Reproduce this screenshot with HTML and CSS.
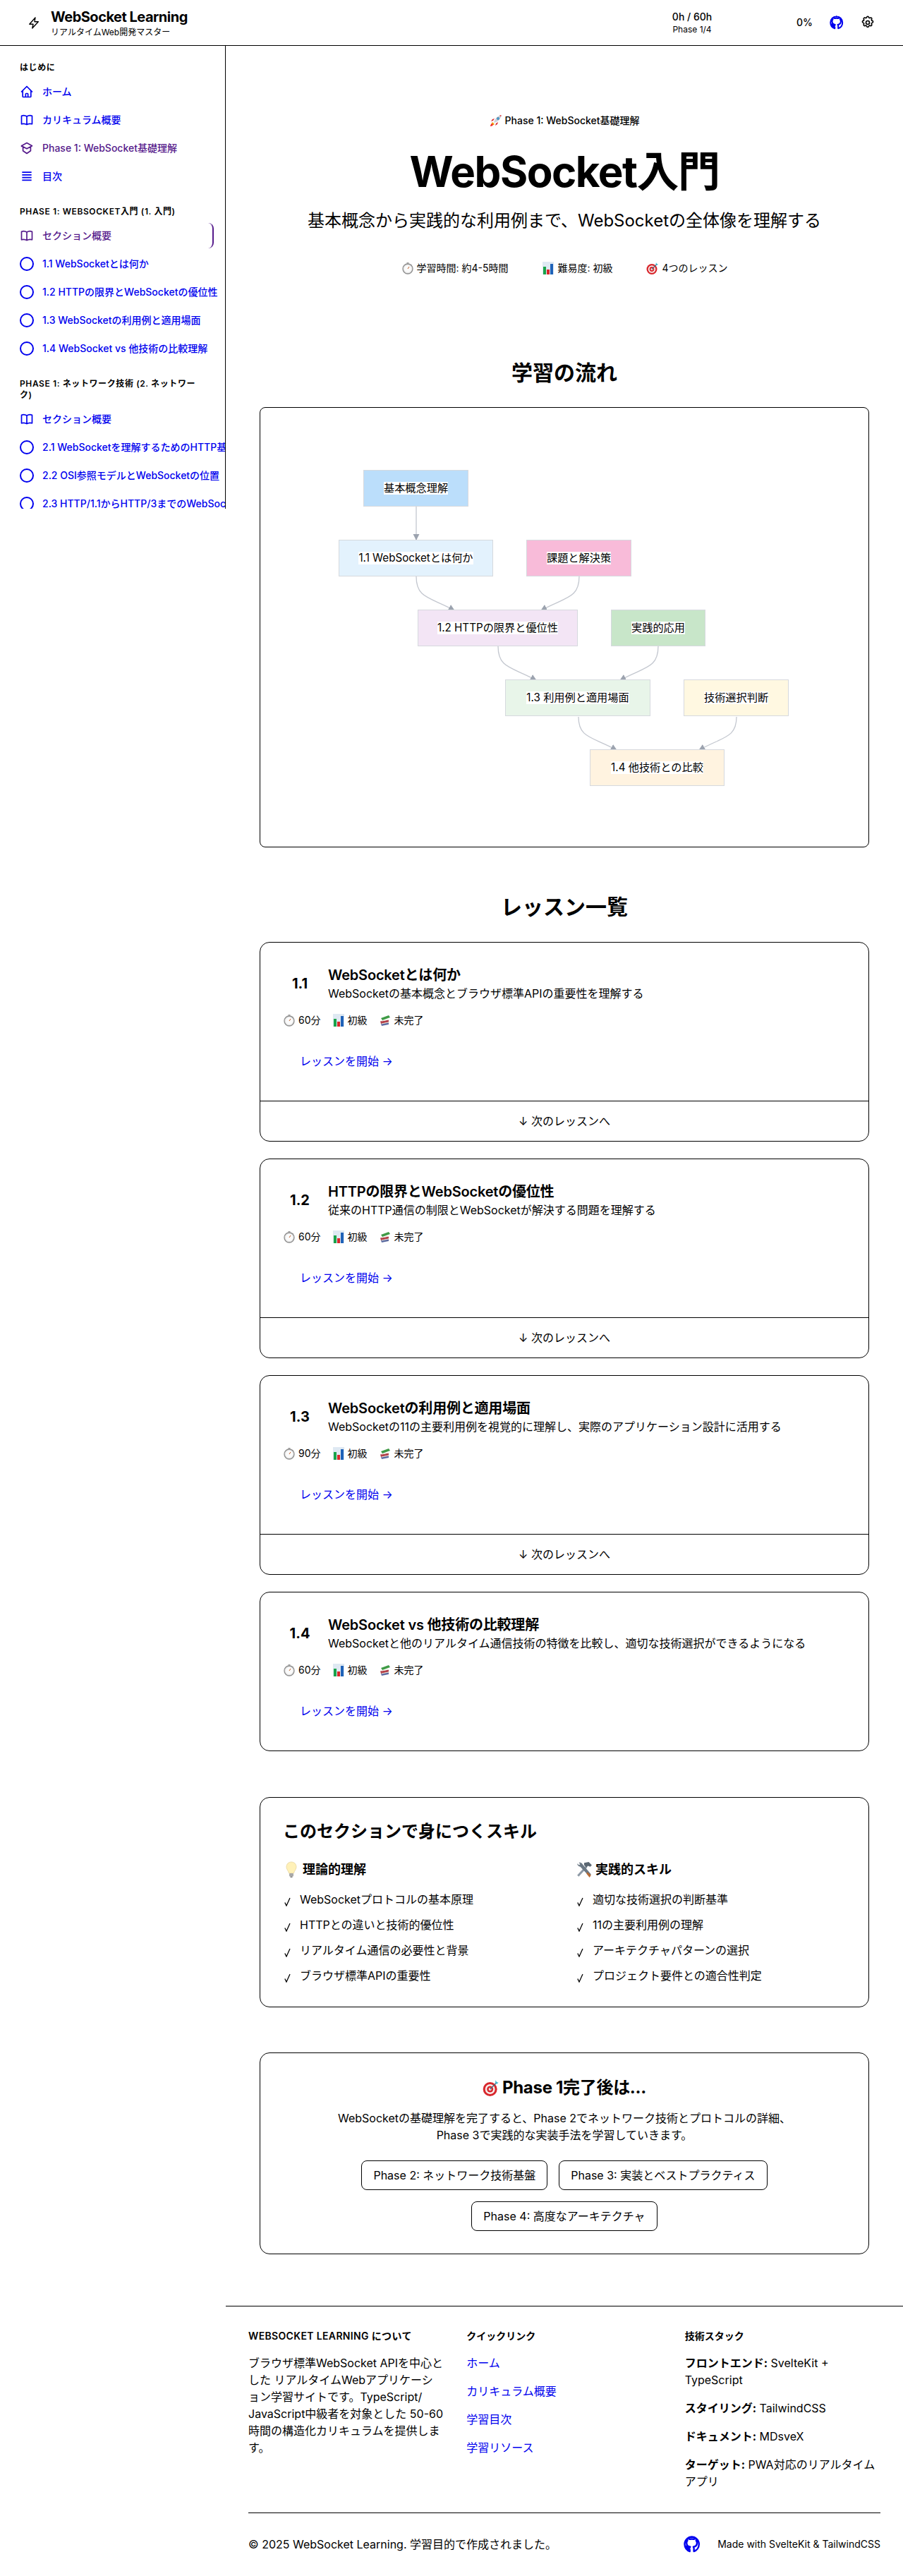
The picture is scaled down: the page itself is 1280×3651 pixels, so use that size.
FILE: index.html
```html
<!DOCTYPE html>
<html lang="ja">
<head>
<meta charset="utf-8">
<title>WebSocket入門</title>
<link rel="stylesheet" href="styles.css">
</head>
<body>
<svg class="defs" width="0" height="0" aria-hidden="true">
  <defs>
    <symbol id="i-home" viewBox="0 0 24 24"><path d="M3 12l2-2m0 0l7-7 7 7M5 10v10a1 1 0 001 1h3m10-11l2 2m-2-2v10a1 1 0 01-1 1h-3m-6 0a1 1 0 001-1v-4a1 1 0 011-1h2a1 1 0 011 1v4a1 1 0 001 1m-6 0h6" fill="none" stroke="currentColor" stroke-width="2" stroke-linecap="round" stroke-linejoin="round"/></symbol>
    <symbol id="i-book" viewBox="0 0 24 24"><path d="M3 5c3-1 6-1 9 1 3-2 6-2 9-1v14c-3-1-6-1-9 1-3-2-6-2-9-1zM12 6v14" fill="none" stroke="currentColor" stroke-width="2" stroke-linejoin="round"/></symbol>
    <symbol id="i-cap" viewBox="0 0 24 24"><path d="M12 3l9 5-9 5-9-5zM5.500 10v6.500L12 21l6.500-4.500V10M3 8v1" fill="none" stroke="currentColor" stroke-width="2" stroke-linejoin="round" stroke-linecap="round"/></symbol>
    <symbol id="i-menu" viewBox="0 0 24 24"><path d="M4 5h16M4 9.500h16M4 14h16M4 18.500h16" fill="none" stroke="currentColor" stroke-width="2"/></symbol>
    <symbol id="i-circle" viewBox="0 0 20 20"><circle cx="10" cy="10" r="9" fill="none" stroke="currentColor" stroke-width="2"/></symbol>
    <symbol id="i-check" viewBox="0 0 9 13"><path d="M.8 7.500L3 12 8 1" fill="none" stroke="currentColor" stroke-width="1.300"/></symbol>
    <symbol id="i-gh" viewBox="0 0 24 24"><path d="M12 1.500C6.200 1.500 1.500 6.200 1.500 12c0 4.600 3 8.600 7.200 10v-2.600c-2.900.6-3.600-1.200-3.800-2-.2-.5-.9-1.500-1.300-1.700-.4-.2-.9-.7 0-.7.800 0 1.500.8 1.700 1.100 1 1.600 2.500 1.200 3.400.9.100-.7.400-1.200.7-1.400-2.600-.3-5.200-1.300-5.200-5.700 0-1.300.4-2.300 1.200-3.100-.1-.3-.5-1.500.1-3.100 0 0 1-.3 3.200 1.200a11 11 0 015.800 0c2.200-1.500 3.200-1.200 3.200-1.200.6 1.600.2 2.800.1 3.100.8.800 1.200 1.800 1.200 3.100 0 4.400-2.600 5.400-5.200 5.700.4.400.8 1 .8 2.100V22c4.200-1.400 7.200-5.400 7.200-10 0-5.800-4.700-10.500-10.500-10.500z" fill="none" stroke="currentColor" stroke-width="2.400" stroke-linejoin="round"/></symbol>
    <symbol id="i-watch" viewBox="0 0 18 18"><path d="M7.500 1h3v1.500h-3zM13.500 3.500l1.500 1.200-.8.800-1.400-1.100z" fill="#9a9a9a"/><circle cx="9" cy="10" r="7" fill="#e9e9e9" stroke="#8d8d8d" stroke-width="1.300"/><circle cx="9" cy="10" r="5" fill="#fbfbfb"/><path d="M9 10l2-3" stroke="#c4622d" stroke-width="1"/></symbol>
    <symbol id="i-chart" viewBox="0 0 18 18"><rect x="1" y="0" width="16" height="18" fill="#dfe9f3"/><rect x="2" y="7" width="4" height="11" fill="#19a34a"/><rect x="7" y="11" width="4" height="7" fill="#d9262c"/><rect x="12" y="3" width="4" height="15" fill="#1f62b8"/></symbol>
    <symbol id="i-books" viewBox="0 0 18 18"><path d="M3 14l11-2v3L4 17z" fill="#5b6aa0"/><path d="M2 10.500l12-2v3L3 14z" fill="#b3404a"/><path d="M3 6l11-4 2 3-11 4z" fill="#3f9a46"/><path d="M4 9.500l10-2v1L4 10.500zM4 13.500l10-2v1L4 14.500z" fill="#e9e4d8"/></symbol>
    <symbol id="i-target" viewBox="0 0 18 18"><circle cx="8" cy="10.500" r="7.500" fill="#d8272d"/><circle cx="8" cy="10.500" r="5.200" fill="#f8f0ee"/><circle cx="8" cy="10.500" r="3.400" fill="#d8272d"/><circle cx="8" cy="10.500" r="1.500" fill="#f8f0ee"/><path d="M8 10.500l7-7" stroke="#4a6a80" stroke-width="1.100"/><path d="M14 1l1 2 2 .5-2 1.500-1.500-1.500z" fill="#37b7d0"/></symbol>
    <symbol id="i-rocket" viewBox="0 0 18 18"><path d="M3 15c-1-1 0-3 1-4l3 3c-1 1-3 2-4 1z" fill="#f59e0b"/><path d="M1 17c0-2 1-3 2-4l2 2c-1 1-2 2-4 2z" fill="#ef2b2d"/><path d="M5 9l-3 1 2-3 3-1zM9 13l-1 3 3-2 1-3z" fill="#d8272d"/><path d="M6 12C7 7 11 2 17 1c-1 6-6 10-11 11z" fill="#c9d3df"/><path d="M14 1.500l2.500-.5-.5 2.500z" fill="#ef3b3b"/><circle cx="12" cy="6" r="1.700" fill="#3aa3df" stroke="#5f7387" stroke-width=".6"/></symbol>
    <symbol id="i-bulb" viewBox="-3 -1 24 24"><path d="M9 0c4 0 7 3 7 7 0 3-2 5-3 7l-.5 2h-7L5 14C4 12 2 10 2 7c0-4 3-7 7-7z" fill="#fff1b8" stroke="#e7d6a0" stroke-width=".8"/><rect x="6" y="16" width="6" height="4.500" rx="1" fill="#a9a9a9"/><rect x="7.500" y="20.500" width="3" height="1.500" fill="#777"/></symbol>
    <symbol id="i-tools" viewBox="0 0 22 22"><path d="M15 8L4 20l-2-2L13 6z" fill="#8d99a6"/><path d="M4 2c2-1 4 0 5 2L20 17l-2.500 2.500L6 7C4 7 2 5 2 3l2.500 2 1.500-1.500z" fill="#6b7884"/><path d="M11 2l6-1 4 4-2 2-3-1-2 2-3-3z" fill="#5a6671"/><path d="M15 14l5 4-2 3-4-5z" fill="#b66a35"/></symbol>
  </defs>
</svg>

<header class="topbar">
  <div class="brand">
    <svg class="bolt" viewBox="0 0 16 17"><path d="M10 1L1.800 10.300H7L5.800 16 14.300 6.700H9z" fill="none" stroke="currentColor" stroke-width="1.400" stroke-linejoin="round"/></svg>
    <div>
      <div class="brand-title">WebSocket Learning</div>
      <div class="brand-sub">リアルタイムWeb開発マスター</div>
    </div>
  </div>
  <div class="top-stats">
    <div class="hours">0h / 60h</div>
    <div class="phase-count">Phase 1/4</div>
  </div>
  <div class="top-percent">0%</div>
  <a class="top-gh" href="#"><svg class="icon"><use href="#i-gh"/></svg></a>
  <svg class="gear" viewBox="0 0 24 24"><path d="M10.300 2.800c.4-1.700 3-1.700 3.400 0a1.700 1.700 0 002.600 1.100c1.500-.9 3.300.8 2.400 2.400a1.700 1.700 0 001.100 2.600c1.700.4 1.700 3 0 3.400a1.700 1.700 0 00-1.100 2.600c.9 1.500-.8 3.300-2.400 2.400a1.700 1.700 0 00-2.600 1.100c-.4 1.700-3 1.700-3.400 0a1.700 1.700 0 00-2.600-1.100c-1.500.9-3.300-.8-2.400-2.400a1.700 1.700 0 00-1.100-2.600c-1.700-.4-1.700-3 0-3.400a1.700 1.700 0 001.100-2.600c-.9-1.500.8-3.300 2.400-2.400a1.700 1.700 0 002.600-1.100z" fill="none" stroke="currentColor" stroke-width="2"/><circle cx="12" cy="12" r="3" fill="none" stroke="currentColor" stroke-width="2"/></svg>
</header>

<div class="shell">
  <aside class="sidebar">
    <section class="nav-group">
      <h2 class="nav-title">はじめに</h2>
      <ul class="nav-list">
        <li><a class="nav-item" href="#"><svg class="icon"><use href="#i-home"/></svg>ホーム</a></li>
        <li><a class="nav-item" href="#"><svg class="icon"><use href="#i-book"/></svg>カリキュラム概要</a></li>
        <li><a class="nav-item visited" href="#"><svg class="icon"><use href="#i-cap"/></svg>Phase 1: WebSocket基礎理解</a></li>
        <li><a class="nav-item" href="#"><svg class="icon"><use href="#i-menu"/></svg>目次</a></li>
      </ul>
    </section>
    <section class="nav-group">
      <h2 class="nav-title">Phase 1: WebSocket入門 (1. 入門)</h2>
      <ul class="nav-list">
        <li><a class="nav-item visited active" href="#"><svg class="icon"><use href="#i-book"/></svg>セクション概要</a></li>
        <li><a class="nav-item" href="#"><svg class="icon"><use href="#i-circle"/></svg>1.1 WebSocketとは何か</a></li>
        <li><a class="nav-item" href="#"><svg class="icon"><use href="#i-circle"/></svg>1.2 HTTPの限界とWebSocketの優位性</a></li>
        <li><a class="nav-item" href="#"><svg class="icon"><use href="#i-circle"/></svg>1.3 WebSocketの利用例と適用場面</a></li>
        <li><a class="nav-item" href="#"><svg class="icon"><use href="#i-circle"/></svg>1.4 WebSocket vs 他技術の比較理解</a></li>
      </ul>
    </section>
    <section class="nav-group">
      <h2 class="nav-title">Phase 1: ネットワーク技術 (2. ネットワーク)</h2>
      <ul class="nav-list">
        <li><a class="nav-item" href="#"><svg class="icon"><use href="#i-book"/></svg>セクション概要</a></li>
        <li><a class="nav-item" href="#"><svg class="icon"><use href="#i-circle"/></svg>2.1 WebSocketを理解するためのHTTP基礎</a></li>
        <li><a class="nav-item" href="#"><svg class="icon"><use href="#i-circle"/></svg>2.2 OSI参照モデルとWebSocketの位置</a></li>
        <li><a class="nav-item" href="#"><svg class="icon"><use href="#i-circle"/></svg>2.3 HTTP/1.1からHTTP/3までのWebSocket</a></li>
      </ul>
    </section>
  </aside>

  <div class="content">
    <main class="main">
      <section class="hero">
        <p class="hero-phase"><svg class="emoji"><use href="#i-rocket"/></svg>Phase 1: WebSocket基礎理解</p>
        <h1 class="hero-title">WebSocket入門</h1>
        <p class="hero-sub">基本概念から実践的な利用例まで、WebSocketの全体像を理解する</p>
        <div class="hero-meta">
          <span class="meta-item"><svg class="emoji"><use href="#i-watch"/></svg>学習時間: 約4-5時間</span>
          <span class="meta-item"><svg class="emoji"><use href="#i-chart"/></svg>難易度: 初級</span>
          <span class="meta-item"><svg class="emoji"><use href="#i-target"/></svg>4つのレッスン</span>
        </div>
      </section>

      <h2 class="section-title">学習の流れ</h2>
      <div class="card diagram-card">
        <div class="diagram">
          <svg class="edges" viewBox="0 0 862 622">
            <defs><marker id="arrow" viewBox="0 0 10 10" refX="9" refY="5" markerWidth="7" markerHeight="7" orient="auto"><path d="M0 0L10 5L0 10z" fill="#9ca3af"/></marker></defs>
            <g class="edge-lines">
              <path d="M221 140V187" marker-end="url(#arrow)"/>
              <path d="M221 239C221 270 240 268 275 287" marker-end="url(#arrow)"/>
              <path d="M452 239C452 270 433 268 398 287" marker-end="url(#arrow)"/>
              <path d="M337 338C337 369 356 367 391 386" marker-end="url(#arrow)"/>
              <path d="M564 338C564 369 545 367 510 386" marker-end="url(#arrow)"/>
              <path d="M451 438C451 468 470 466 505 485" marker-end="url(#arrow)"/>
              <path d="M675 438C675 468 656 466 622 485" marker-end="url(#arrow)"/>
            </g>
          </svg>
          <div class="node n-base"><span>基本概念理解</span></div>
          <div class="node n-11"><span>1.1 WebSocketとは何か</span></div>
          <div class="node n-issue"><span>課題と解決策</span></div>
          <div class="node n-12"><span>1.2 HTTPの限界と優位性</span></div>
          <div class="node n-apply"><span>実践的応用</span></div>
          <div class="node n-13"><span>1.3 利用例と適用場面</span></div>
          <div class="node n-tech"><span>技術選択判断</span></div>
          <div class="node n-14"><span>1.4 他技術との比較</span></div>
        </div>
      </div>

      <h2 class="section-title lessons-title">レッスン一覧</h2>
      <div class="lessons">
        <article class="card lesson">
          <div class="lesson-body">
            <div class="lesson-head">
              <div class="lesson-num">1.1</div>
              <div><h3 class="lesson-title">WebSocketとは何か</h3><p class="lesson-desc">WebSocketの基本概念とブラウザ標準APIの重要性を理解する</p></div>
            </div>
            <div class="lesson-meta">
              <span class="lm"><svg class="emoji"><use href="#i-watch"/></svg>60分</span>
              <span class="lm"><svg class="emoji"><use href="#i-chart"/></svg>初級</span>
              <span class="lm"><svg class="emoji"><use href="#i-books"/></svg>未完了</span>
            </div>
            <a class="lesson-link" href="#">レッスンを開始 →</a>
          </div>
          <div class="lesson-next">↓ 次のレッスンへ</div>
        </article>
        <article class="card lesson">
          <div class="lesson-body">
            <div class="lesson-head">
              <div class="lesson-num">1.2</div>
              <div><h3 class="lesson-title">HTTPの限界とWebSocketの優位性</h3><p class="lesson-desc">従来のHTTP通信の制限とWebSocketが解決する問題を理解する</p></div>
            </div>
            <div class="lesson-meta">
              <span class="lm"><svg class="emoji"><use href="#i-watch"/></svg>60分</span>
              <span class="lm"><svg class="emoji"><use href="#i-chart"/></svg>初級</span>
              <span class="lm"><svg class="emoji"><use href="#i-books"/></svg>未完了</span>
            </div>
            <a class="lesson-link" href="#">レッスンを開始 →</a>
          </div>
          <div class="lesson-next">↓ 次のレッスンへ</div>
        </article>
        <article class="card lesson">
          <div class="lesson-body">
            <div class="lesson-head">
              <div class="lesson-num">1.3</div>
              <div><h3 class="lesson-title">WebSocketの利用例と適用場面</h3><p class="lesson-desc">WebSocketの11の主要利用例を視覚的に理解し、実際のアプリケーション設計に活用する</p></div>
            </div>
            <div class="lesson-meta">
              <span class="lm"><svg class="emoji"><use href="#i-watch"/></svg>90分</span>
              <span class="lm"><svg class="emoji"><use href="#i-chart"/></svg>初級</span>
              <span class="lm"><svg class="emoji"><use href="#i-books"/></svg>未完了</span>
            </div>
            <a class="lesson-link" href="#">レッスンを開始 →</a>
          </div>
          <div class="lesson-next">↓ 次のレッスンへ</div>
        </article>
        <article class="card lesson">
          <div class="lesson-body">
            <div class="lesson-head">
              <div class="lesson-num">1.4</div>
              <div><h3 class="lesson-title">WebSocket vs 他技術の比較理解</h3><p class="lesson-desc">WebSocketと他のリアルタイム通信技術の特徴を比較し、適切な技術選択ができるようになる</p></div>
            </div>
            <div class="lesson-meta">
              <span class="lm"><svg class="emoji"><use href="#i-watch"/></svg>60分</span>
              <span class="lm"><svg class="emoji"><use href="#i-chart"/></svg>初級</span>
              <span class="lm"><svg class="emoji"><use href="#i-books"/></svg>未完了</span>
            </div>
            <a class="lesson-link" href="#">レッスンを開始 →</a>
          </div>
        </article>
      </div>

      <section class="card skills">
        <h2 class="card-title">このセクションで身につくスキル</h2>
        <div class="skill-grid">
          <div>
            <h3 class="skill-head"><svg class="emoji-lg"><use href="#i-bulb"/></svg>理論的理解</h3>
            <ul class="skill-list">
              <li><svg class="check"><use href="#i-check"/></svg>WebSocketプロトコルの基本原理</li>
              <li><svg class="check"><use href="#i-check"/></svg>HTTPとの違いと技術的優位性</li>
              <li><svg class="check"><use href="#i-check"/></svg>リアルタイム通信の必要性と背景</li>
              <li><svg class="check"><use href="#i-check"/></svg>ブラウザ標準APIの重要性</li>
            </ul>
          </div>
          <div>
            <h3 class="skill-head"><svg class="emoji-lg"><use href="#i-tools"/></svg>実践的スキル</h3>
            <ul class="skill-list">
              <li><svg class="check"><use href="#i-check"/></svg>適切な技術選択の判断基準</li>
              <li><svg class="check"><use href="#i-check"/></svg>11の主要利用例の理解</li>
              <li><svg class="check"><use href="#i-check"/></svg>アーキテクチャパターンの選択</li>
              <li><svg class="check"><use href="#i-check"/></svg>プロジェクト要件との適合性判定</li>
            </ul>
          </div>
        </div>
      </section>

      <section class="card next">
        <h2 class="card-title next-title"><svg class="emoji-lg"><use href="#i-target"/></svg>Phase 1完了後は...</h2>
        <p class="next-text">WebSocketの基礎理解を完了すると、Phase 2でネットワーク技術とプロトコルの詳細、<br>Phase 3で実践的な実装手法を学習していきます。</p>
        <div class="next-tags">
          <span class="tag">Phase 2: ネットワーク技術基盤</span>
          <span class="tag">Phase 3: 実装とベストプラクティス</span>
          <span class="tag">Phase 4: 高度なアーキテクチャ</span>
        </div>
      </section>
    </main>

    <footer class="footer">
      <div class="footer-grid">
        <div>
          <h4 class="footer-head footer-head-latin">WebSocket Learning について</h4>
          <p class="footer-text">ブラウザ標準WebSocket APIを中心とした リアルタイムWebアプリケーション学習サイトです。TypeScript/<wbr>JavaScript中級者を対象とした 50-60時間の構造化カリキュラムを提供します。</p>
        </div>
        <div>
          <h4 class="footer-head">クイックリンク</h4>
          <ul class="footer-links">
            <li><a href="#">ホーム</a></li>
            <li><a href="#">カリキュラム概要</a></li>
            <li><a href="#">学習目次</a></li>
            <li><a href="#">学習リソース</a></li>
          </ul>
        </div>
        <div>
          <h4 class="footer-head">技術スタック</h4>
          <ul class="footer-stack">
            <li><strong>フロントエンド:</strong> SvelteKit + TypeScript</li>
            <li><strong>スタイリング:</strong> TailwindCSS</li>
            <li><strong>ドキュメント:</strong> MDsveX</li>
            <li><strong>ターゲット:</strong> PWA対応のリアルタイムアプリ</li>
          </ul>
        </div>
      </div>
      <div class="footer-bottom">
        <p>© 2025 WebSocket Learning. 学習目的で作成されました。</p>
        <div class="footer-right">
          <a class="footer-gh" href="#"><svg><use href="#i-gh"/></svg></a>
          <span class="made">Made with SvelteKit &amp; TailwindCSS</span>
        </div>
      </div>
    </footer>
  </div>
</div>
</body>
</html>
```
FILE: styles.css
```css
* { box-sizing: border-box; }
html, body { margin: 0; padding: 0; }
body {
  font-family: Inter, "Noto Sans CJK JP", sans-serif;
  font-size: 16px;
  line-height: 24px;
  color: #000;
  background: #fff;
}
h1, h2, h3, h4, p, ul { margin: 0; padding: 0; }
ul { list-style: none; }
a { color: #0000ee; text-decoration: none; }
.defs { position: absolute; }

.topbar {
  display: flex;
  align-items: center;
  height: 65px;
  border-bottom: 1px solid #000;
  padding: 0 32px 0 40px;
}
.brand { display: flex; align-items: center; gap: 16px; flex: 1; }
.bolt { width: 16px; height: 17px; }
.brand-title { font-size: 20px; line-height: 28px; font-weight: 700; letter-spacing: -.5px; }
.brand-sub { font-size: 12px; line-height: 16px; }
.top-stats { width: 64px; text-align: center; margin-right: 116px; }
.hours { font-size: 14px; line-height: 20px; font-weight: 500; }
.phase-count { font-size: 12px; line-height: 16px; }
.top-percent { font-size: 14px; line-height: 20px; font-weight: 500; margin-right: 24px; }
.top-gh { display: flex; margin-right: 24px; }
.icon { width: 20px; height: 20px; flex: none; }
.gear { width: 20px; height: 20px; margin-right: 8px; }

.shell { display: grid; grid-template-columns: 320px 1fr; align-items: start; }
.sidebar {
  height: 656px;
  overflow: hidden;
  border-right: 1px solid #000;
  padding: 23px 16px 0;
}
.nav-group { margin-bottom: 24px; }
.nav-title {
  font-size: 12px;
  line-height: 16px;
  font-weight: 600;
  letter-spacing: .6px;
  text-transform: uppercase;
  padding: 0 12px;
  margin-bottom: 8px;
}
.nav-list { display: flex; flex-direction: column; gap: 4px; }
.nav-item {
  display: flex;
  align-items: center;
  gap: 12px;
  height: 36px;
  padding: 0 12px;
  font-size: 14px;
  line-height: 20px;
  font-weight: 500;
  white-space: nowrap;
  border-radius: 8px;
}
.visited { color: #551a8b; }
.active { border-right: 2px solid #551a8b; }

.content { min-width: 0; }
.main { padding: 96px 48px 73px; }
.hero { text-align: center; padding-bottom: 120px; }
.hero-phase { display: flex; justify-content: center; align-items: center; font-size: 14px; line-height: 20px; font-weight: 500; margin-bottom: 32px; }
.emoji { width: 18px; height: 18px; margin-right: 4px; flex: none; }
.emoji-lg { width: 24px; height: 24px; margin-right: 4px; flex: none; }
.hero-title { font-size: 60px; line-height: 60px; font-weight: 700; letter-spacing: -1.5px; margin-bottom: 24px; }
.hero-sub { font-size: 24px; line-height: 32px; margin-bottom: 41px; }
.hero-meta { display: flex; justify-content: center; gap: 48px; font-size: 14px; line-height: 20px; }
.meta-item { display: flex; align-items: center; }

.section-title { font-size: 30px; line-height: 36px; font-weight: 700; text-align: center; margin-bottom: 31px; }
.lessons-title { margin-top: 66px; margin-bottom: 32px; }
.card { border: 1px solid #000; border-radius: 14px; background: #fff; }

.diagram-card { height: 624px; padding: 0; border-radius: 8px; }
.diagram { position: relative; width: 862px; height: 622px; }
.edges { position: absolute; inset: 0; width: 100%; height: 100%; }
.edge-lines path { fill: none; stroke: #c3c7cf; stroke-width: 1.3; }
.node {
  position: absolute;
  display: flex;
  align-items: center;
  justify-content: center;
  height: 52px;
  border: 1.500px solid #d6d9de;
  font-size: 15.200px;
  line-height: 18px;
}
.node span { background: #fff; white-space: nowrap; }
.n-base { left: 146px; top: 88px; width: 149px; background: #bbdefb; }
.n-11 { left: 111px; top: 187px; width: 219px; background: #e3f2fd; }
.n-issue { left: 377px; top: 187px; width: 149px; background: #f8bbd9; }
.n-12 { left: 223px; top: 286px; width: 227px; background: #f3e5f5; }
.n-apply { left: 497px; top: 286px; width: 134px; background: #c8e6c9; }
.n-13 { left: 347px; top: 385px; width: 206px; background: #e8f5e9; }
.n-tech { left: 600px; top: 385px; width: 149px; background: #fff8e1; }
.n-14 { left: 467px; top: 484px; width: 191px; background: #fff3e0; }

.lessons { display: flex; flex-direction: column; gap: 24px; margin-bottom: 65px; }
.lesson-body { padding: 32px; }
.lesson-head { display: flex; align-items: center; gap: 16px; }
.lesson-num { width: 48px; text-align: center; font-size: 20px; line-height: 28px; font-weight: 700; }
.lesson-title { font-size: 20px; line-height: 28px; font-weight: 600; letter-spacing: -.2px; }
.lesson-desc { font-size: 16px; line-height: 24px; }
.lesson-meta { display: flex; gap: 16px; font-size: 14px; line-height: 20px; margin-top: 16px; }
.lm { display: flex; align-items: center; }
.lesson-link { display: inline-flex; align-items: center; height: 48px; padding: 0 24px; margin-top: 24px; }
.lesson-next { border-top: 1px solid #000; padding: 16px; text-align: center; }

.skills { padding: 32px; margin-bottom: 64px; }
.card-title { font-size: 24px; line-height: 32px; font-weight: 700; margin-bottom: 24px; }
.skill-grid { display: grid; grid-template-columns: 1fr 1fr; gap: 32px; }
.skill-head { display: flex; align-items: center; font-size: 18px; line-height: 28px; font-weight: 600; margin-bottom: 16px; }
.skill-list { display: flex; flex-direction: column; gap: 12px; }
.skill-list li { display: flex; align-items: flex-start; gap: 13px; }
.check { width: 9px; height: 13px; margin: 9px 0 0 2px; flex: none; }

.next { padding: 33px 32px 32px; text-align: center; }
.next-title { display: flex; justify-content: center; align-items: center; margin-bottom: 15px; letter-spacing: -.3px; }
.next-text { margin-bottom: 24px; }
.next-tags { display: flex; flex-wrap: wrap; justify-content: center; gap: 16px; }
.tag { border: 1px solid #000; border-radius: 8px; padding: 8px 16px; height: 42px; }

.footer { border-top: 1px solid #000; padding: 32px; }
.footer-grid { display: grid; grid-template-columns: repeat(3, 1fr); gap: 32px; padding-bottom: 32px; border-bottom: 1px solid #000; }
.footer-head { font-size: 14px; line-height: 20px; font-weight: 600; text-transform: uppercase; margin-bottom: 16px; }
.footer-head-latin { letter-spacing: .35px; }
.footer-links { display: flex; flex-direction: column; gap: 16px; }
.footer-stack { display: flex; flex-direction: column; gap: 16px; }
.footer-stack strong { font-weight: 700; }
.footer-bottom { display: flex; justify-content: space-between; align-items: center; padding-top: 32px; }
.footer-right { display: flex; align-items: center; gap: 24px; }
.footer-gh { display: flex; }
.footer-gh svg { width: 24px; height: 24px; }
.made { font-size: 14px; line-height: 20px; }
```
